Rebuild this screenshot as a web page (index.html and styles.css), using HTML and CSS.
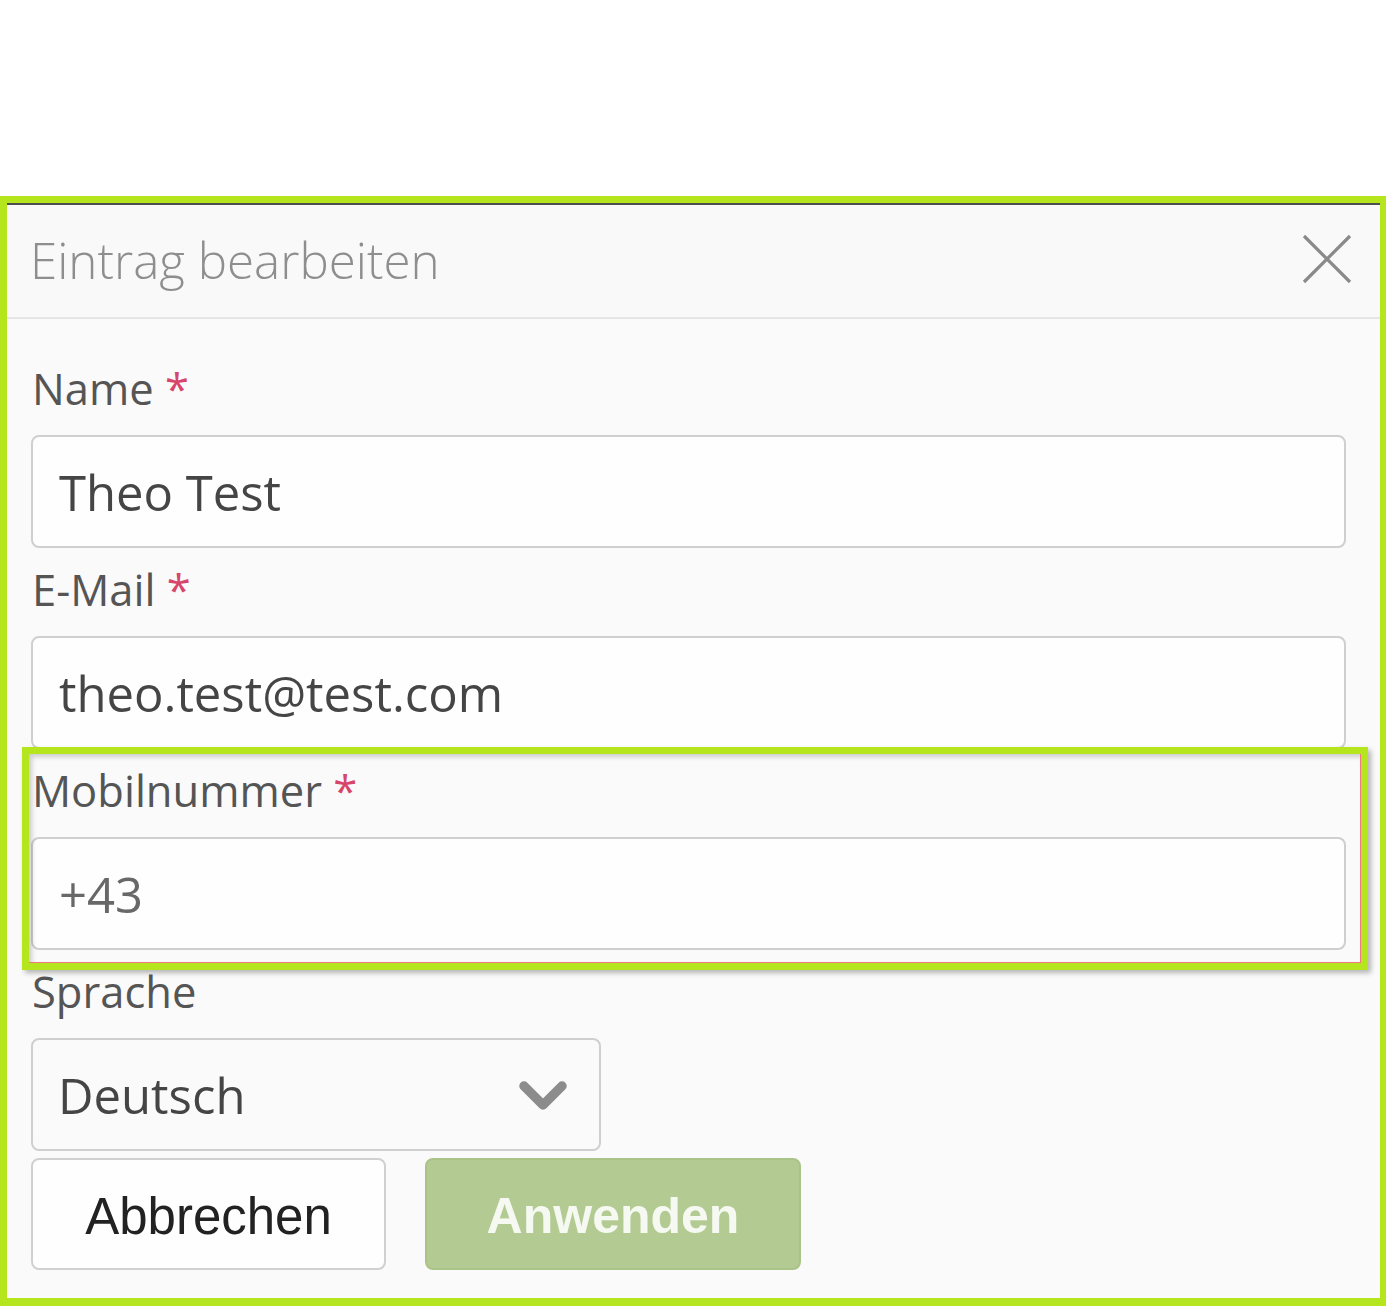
FILE: index.html
```html
<!DOCTYPE html>
<html lang="de">
<head>
<meta charset="utf-8">
<title>Eintrag bearbeiten</title>
<link rel="stylesheet" href="styles.css">
</head>
<body>
<div class="frame">
  <div class="modal">
    <div class="modal-header">
      <h1 class="modal-title">Eintrag bearbeiten</h1>
      <button class="close" aria-label="Schließen">
        <svg width="50" height="50" viewBox="0 0 50 50"><path d="M2 2 L48 48 M48 2 L2 48" stroke="#8a8a8a" stroke-width="3.2" fill="none"/></svg>
      </button>
    </div>
    <div class="modal-body">
      <div class="field">
        <label class="label">Name <span class="req">*</span></label>
        <input class="control" type="text" value="Theo Test">
      </div>
      <div class="field">
        <label class="label">E-Mail <span class="req">*</span></label>
        <input class="control" type="text" value="theo.test@test.com">
      </div>
      <div class="field field-mark">
        <label class="label">Mobilnummer <span class="req">*</span></label>
        <input class="control control-light" type="text" value="+43">
        <div class="highlight"></div>
      </div>
      <div class="field">
        <label class="label">Sprache</label>
        <div class="select-wrap">
          <select class="control select">
            <option>Deutsch</option>
          </select>
          <svg class="chevron" width="50" height="34" viewBox="0 0 50 34"><polyline points="6,6 25,25 44,6" fill="none" stroke="#8c8c8c" stroke-width="9.5" stroke-linejoin="round" stroke-linecap="round"/></svg>
        </div>
      </div>
      <div class="actions">
        <button class="btn btn-cancel">Abbrechen</button>
        <button class="btn btn-apply">Anwenden</button>
      </div>
    </div>
  </div>
</div>
</body>
</html>
```
FILE: styles.css
```css
html, body {
  margin: 0;
  padding: 0;
  background: #ffffff;
}
body {
  font-family: "Open Sans", "DejaVu Sans", sans-serif;
}
.frame {
  margin-top: 196px;
  width: 1386px;
  height: 1110px;
  box-sizing: border-box;
  border-style: solid;
  border-color: #b5e61d;
  border-width: 7px 6px 8px 7px;
  background: #fafafa;
}
.modal {
  border-top: 2px solid #4e4e4e;
  height: 100%;
  box-sizing: border-box;
}
.modal-header {
  height: 114px;
  box-sizing: border-box;
  border-bottom: 2px solid #e6e6e6;
  display: flex;
  align-items: center;
  justify-content: space-between;
  padding: 0 28px 4px 23px;
  background: #f9f9f9;
}
.modal-title {
  margin: 0;
  font-weight: 300;
  font-size: 49.3px;
  color: #8e8e8e;
  letter-spacing: 0;
}
.close {
  border: 0;
  background: none;
  padding: 0;
  width: 50px;
  height: 50px;
  display: flex;
}
.modal-body {
  padding: 41px 34px 26px 24px;
}
.field {
  display: flex;
  flex-direction: column;
  margin-bottom: 13px;
}
.field-mark {
  position: relative;
}
.label {
  font-size: 43.5px;
  line-height: 57px;
  height: 57px;
  color: #555555;
  margin-bottom: 18px;
  padding-left: 1px;
}
.req {
  color: #d8456a;
}
.control {
  box-sizing: border-box;
  height: 113px;
  width: 100%;
  border: 2px solid #cfcfcf;
  border-radius: 8px;
  background: #fefefe;
  font-family: "Open Sans", "DejaVu Sans", sans-serif;
  font-size: 49px;
  color: #454545;
  padding: 0 26px;
  margin: 0;
  outline: none;
}
.control-light {
  color: #686868;
}
.select-wrap {
  position: relative;
  width: 570px;
}
.select {
  appearance: none;
  -webkit-appearance: none;
  background: #fafafa;
  width: 570px;
  padding-left: 25px;
}
.chevron {
  position: absolute;
  left: 487px;
  top: 42px;
}
.highlight {
  position: absolute;
  left: -9px;
  top: -15px;
  right: -22px;
  bottom: -20px;
  border: 7px solid #b5e61d;
  box-shadow: inset 3px 3px 5px rgba(0, 0, 0, 0.18), 3px 3px 5px rgba(0, 0, 0, 0.28);
  pointer-events: none;
}
.highlight::after {
  content: "";
  position: absolute;
  left: 0;
  top: 0;
  right: 0;
  bottom: 0;
  border-right: 1px solid #f07a84;
  border-bottom: 1px solid #f07a84;
}
.actions {
  display: flex;
  gap: 39px;
  margin-top: -6px;
}
.btn {
  box-sizing: border-box;
  height: 112px;
  border-radius: 8px;
  font-family: "Liberation Sans", Arial, sans-serif;
  margin: 0;
  padding: 0;
}
.btn-cancel {
  width: 355px;
  border: 2px solid #d0d0d0;
  background: #fefefe;
  color: #222222;
  font-size: 51px;
  padding-top: 4px;
}
.btn-apply {
  width: 376px;
  border: 2px solid #a9c388;
  background: #b3cb92;
  color: #f6f9f1;
  font-size: 50px;
  font-weight: bold;
  padding-top: 4px;
}
```
